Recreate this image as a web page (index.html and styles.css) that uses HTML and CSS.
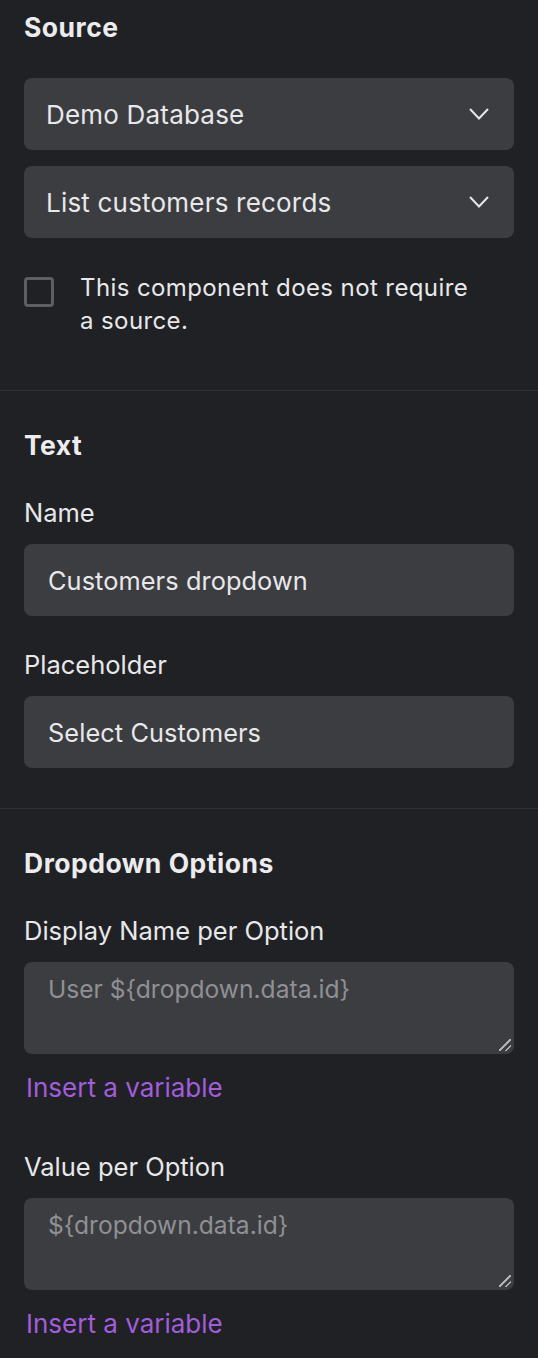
FILE: index.html
```html
<!DOCTYPE html>
<html>
<head>
<meta charset="utf-8">
<link rel="stylesheet" href="styles.css">
</head>
<body>
<div class="panel">
  <section class="section">
    <h2 class="heading">Source</h2>
    <div class="select">
      <span>Demo Database</span>
      <svg class="chev" width="22" height="14" viewBox="0 0 22 14"><path d="M2 2 L11 11.5 L20 2" fill="none" stroke="#e6e6e8" stroke-width="2"/></svg>
    </div>
    <div class="select">
      <span>List customers records</span>
      <svg class="chev" width="22" height="14" viewBox="0 0 22 14"><path d="M2 2 L11 11.5 L20 2" fill="none" stroke="#e6e6e8" stroke-width="2"/></svg>
    </div>
    <label class="check">
      <span class="box"></span>
      <span class="check-text">This component does not require a source.</span>
    </label>
  </section>
  <section class="section">
    <h2 class="heading">Text</h2>
    <div class="field">
      <div class="label">Name</div>
      <div class="input">Customers dropdown</div>
    </div>
    <div class="field">
      <div class="label">Placeholder</div>
      <div class="input">Select Customers</div>
    </div>
  </section>
  <section class="section last">
    <h2 class="heading">Dropdown Options</h2>
    <div class="field">
      <div class="label">Display Name per Option</div>
      <div class="textarea"><span class="ph">User ${dropdown.data.id}</span><span class="grip"></span></div>
      <a class="link">Insert a variable</a>
    </div>
    <div class="field">
      <div class="label">Value per Option</div>
      <div class="textarea"><span class="ph">${dropdown.data.id}</span><span class="grip"></span></div>
      <a class="link">Insert a variable</a>
    </div>
  </section>
</div>
</body>
</html>
```
FILE: styles.css
```css
html, body {
  margin: 0;
  padding: 0;
  background: #202124;
}
body {
  font-family: Inter, "Noto Sans", sans-serif;
  color: #e8e8ea;
  width: 538px;
}
.panel {
  display: flex;
  flex-direction: column;
}
.section {
  padding: 8px 24px 40px;
  border-bottom: 1px solid #2f3034;
  display: flex;
  flex-direction: column;
}
.section + .section {
  padding-top: 35px;
}
.section.last {
  border-bottom: none;
  padding-bottom: 20px;
}
.heading {
  margin: 0;
  font-size: 26.5px;
  font-weight: 700;
  letter-spacing: 0.5px;
  line-height: 38px;
  color: #ececee;
}
.select {
  height: 72px;
  background: #3c3d41;
  border-radius: 8px;
  display: flex;
  align-items: center;
  justify-content: space-between;
  padding: 0 22px;
  font-size: 26px;
  letter-spacing: 0.2px;
  margin-top: 16px;
  box-sizing: border-box;
}
.section .heading + .select {
  margin-top: 32px;
}
.chev {
  display: block;
  margin-right: 2px;
}
.check {
  display: flex;
  gap: 26px;
  margin-top: 39px;
  margin-bottom: 13px;
  align-items: flex-start;
}
.box {
  flex: none;
  width: 30px;
  height: 30px;
  box-sizing: border-box;
  border: 3px solid #5e5f63;
  border-radius: 4px;
}
.check-text {
  font-size: 24px;
  line-height: 33px;
  letter-spacing: 0.4px;
  margin-top: -6px;
  max-width: 395px;
}
.field {
  display: flex;
  flex-direction: column;
  margin-top: 32px;
}
.label {
  font-size: 25.5px;
  line-height: 34px;
  margin-bottom: 14px;
}
.input {
  height: 72px;
  background: #3c3d41;
  border-radius: 8px;
  display: flex;
  align-items: center;
  padding: 0 24px;
  font-size: 25.3px;
  letter-spacing: 0.1px;
}
.textarea {
  position: relative;
  height: 92px;
  background: #3c3d41;
  border-radius: 8px;
  padding: 12px 24px;
  box-sizing: border-box;
  font-size: 24.6px;
  line-height: 30px;
}
.ph {
  color: #8f9094;
}
.grip {
  position: absolute;
  right: 3px;
  bottom: 3px;
  width: 12px;
  height: 12px;
  background:
    linear-gradient(135deg, transparent 45%, #b0b0b0 45%, #b0b0b0 55%, transparent 55%, transparent 72%, #b0b0b0 72%, #b0b0b0 82%, transparent 82%);
}
.link {
  color: #a25ddc;
  font-size: 26px;
  line-height: 34px;
  margin-top: 17px;
  margin-bottom: 13px;
  margin-left: 2px;
}
```
